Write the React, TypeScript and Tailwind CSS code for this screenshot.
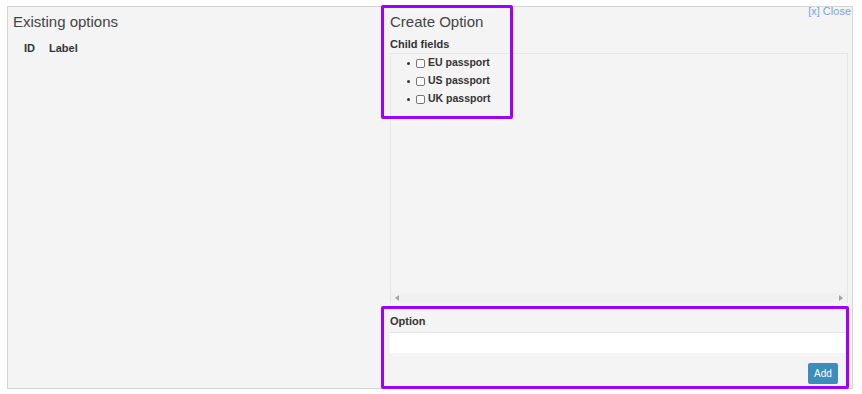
import React from "react";

const fields = ["EU passport", "US passport", "UK passport"];

export default function App() {
  return (
    <div
      className="relative w-[862px] h-[394px] bg-white pt-[6px] pl-[7px] text-[#333]"
      style={{ fontFamily: '"Liberation Sans", Arial, sans-serif' }}
    >
      {/* Panel */}
      <div className="relative flex w-[846px] h-[383px] border border-[#d4d4d4] bg-[#f4f4f4] overflow-hidden">
        <a className="absolute right-[1px] top-[-3px] text-[11px] leading-[14px] text-[#7aa3d4]">
          [x] Close
        </a>

        {/* Existing options */}
        <div className="w-[382px] pl-[5px] pt-[5px]">
          <h3 className="text-[15px] leading-[20px] text-[#444]">Existing options</h3>
          <div className="mt-[8px] ml-[11px] flex gap-[14px] text-[11px] leading-[16px] font-bold">
            <span>ID</span>
            <span>Label</span>
          </div>
        </div>

        {/* Create option */}
        <div className="flex-1 pr-[4px] pt-[5px] flex flex-col">
          <h3 className="text-[15px] leading-[20px] text-[#444]">Create Option</h3>
          <div className="mt-[4px] text-[11px] leading-[16px] font-bold">Child fields</div>

          <div className="mt-[1px] h-[250px] border-t border-l border-r border-[#e6e6e6] flex flex-col">
            <ul className="flex-1 pl-[16px] text-[10.5px] font-bold">
              {fields.map((f) => (
                <li key={f} className="flex items-center h-[18px]">
                  <span className="w-[3px] h-[3px] rounded-full bg-[#333]" />
                  <span className="ml-[6px] w-[9px] h-[9px] border border-[#777] rounded-[2px] bg-white" />
                  <span className="ml-[3px]">{f}</span>
                </li>
              ))}
            </ul>
            <div className="h-[10px] bg-[#f1f1f1] flex items-center justify-between px-[4px]">
              <svg width="4" height="6" viewBox="0 0 4 6"><path d="M4 0 L0 3 L4 6 Z" fill="#a3a3a3" /></svg>
              <svg width="4" height="6" viewBox="0 0 4 6"><path d="M0 0 L4 3 L0 6 Z" fill="#a3a3a3" /></svg>
            </div>
          </div>

          <label className="mt-[10px] text-[11px] leading-[16px] font-bold">Option</label>
          <input className="mt-[3px] h-[21px] bg-white border-t border-[#e2e2e2] outline-none" />
          <div className="mt-[10px] flex justify-end pr-[10px]">
            <button className="w-[30px] h-[21px] bg-[#3c8dbc] text-white text-[10px] rounded-[2px]">
              Add
            </button>
          </div>
        </div>
      </div>

      {/* Annotation outlines */}
      <div className="absolute left-[381px] top-[5px] w-[132px] h-[114px] border-[3px] border-[#9d00ff] rounded-[2px]" />
      <div className="absolute left-[381px] top-[306px] w-[468px] h-[83px] border-[3px] border-[#9d00ff] rounded-[2px]" />
    </div>
  );
}
